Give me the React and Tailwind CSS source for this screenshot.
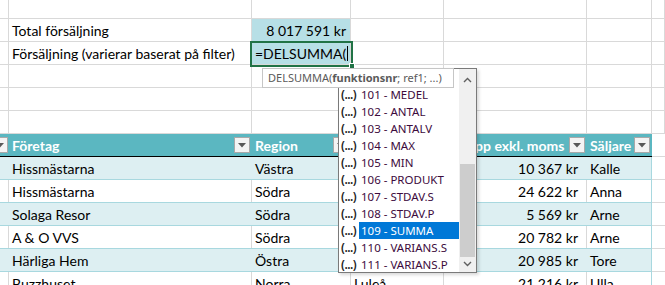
import React from 'react'

const W = ['w-[9px]', 'w-[243px]', 'w-[99px]', 'w-[93px]', 'w-[143px]', 'w-[65px]', 'w-[13px]']

const rows = [
  ['Hissmästarna', 'Västra', 'Umeå', '10 367 kr', 'Kalle'],
  ['Hissmästarna', 'Södra', 'Malmö', '24 622 kr', 'Anna'],
  ['Solaga Resor', 'Södra', 'Lund', '5 569 kr', 'Arne'],
  ['A & O VVS', 'Södra', 'Ystad', '20 782 kr', 'Arne'],
  ['Härliga Hem', 'Östra', 'Visby', '20 985 kr', 'Tore'],
  ['Buzzhuset', 'Norra', 'Luleå', '21 216 kr', 'Ulla'],
]

const items = ['101 - MEDEL', '102 - ANTAL', '103 - ANTALV', '104 - MAX', '105 - MIN', '106 - PRODUKT',
  '107 - STDAV.S', '108 - STDAV.P', '109 - SUMMA', '110 - VARIANS.S', '111 - VARIANS.P']

function FilterBtn() {
  return (
    <div className="w-[16px] h-[16px] shrink-0 bg-[#F4F4F4] border border-[#A9A9A9] flex items-center justify-center">
      <svg width="8" height="5" viewBox="0 0 8 5"><path d="M0 0h8L4 4.5z" fill="#595959" /></svg>
    </div>
  )
}

function GridRow({ h = 'h-[23px]', children }) {
  return <div className={`flex ${h} border-b border-[#D9D9D9]`}>{children}</div>
}

function Cell({ i, className = '', children }) {
  return <div className={`${W[i]} shrink-0 h-full border-r border-[#D9D9D9] flex items-center overflow-hidden whitespace-nowrap ${className}`}>{children}</div>
}

function EmptyRow({ h }) {
  return (
    <GridRow h={h}>
      {W.map((_, i) => <Cell key={i} i={i} />)}
    </GridRow>
  )
}

function HeaderCell({ i, label, className = '' }) {
  return (
    <div className={`${W[i]} shrink-0 h-full flex items-center justify-between overflow-hidden whitespace-nowrap pl-[3px] pr-[2px] ${className}`}>
      <span className="text-white font-bold">{label}</span>
      <FilterBtn />
    </div>
  )
}

function DataRow({ r, teal }) {
  const bg = teal ? 'bg-[#DDEFF2]' : 'bg-white'
  const v = teal ? 'border-[#DDEFF2]' : 'border-[#D9D9D9]'
  return (
    <div className="flex h-[23px]">
      <div className={`flex ${bg} border-b border-[#A8D8DF]`}>
        <div className={`${W[0]} shrink-0 h-full border-r ${v}`} />
        <div className={`${W[1]} shrink-0 h-full border-r ${v} flex items-center pl-[3px]`}>{r[0]}</div>
        <div className={`${W[2]} shrink-0 h-full border-r ${v} flex items-center pl-[3px]`}>{r[1]}</div>
        <div className={`${W[3]} shrink-0 h-full border-r ${v} flex items-center pl-[3px]`}>{r[2]}</div>
        <div className={`${W[4]} shrink-0 h-full border-r ${v} flex items-center justify-end pr-[8px]`}>{r[3]}</div>
        <div className={`${W[5]} shrink-0 h-full border-r border-[#A8D8DF] flex items-center pl-[3px]`}>{r[4]}</div>
      </div>
      <div className={`${W[6]} shrink-0 h-full border-b border-[#D9D9D9]`} />
    </div>
  )
}

export default function App() {
  return (
    <div className="relative w-[665px] h-[285px] overflow-hidden bg-white text-[14px] text-black" style={{ fontFamily: 'Lato, "Open Sans", sans-serif' }}>
      <EmptyRow h="h-[19px]" />
      <GridRow>
        <Cell i={0} />
        <Cell i={1} className="pl-[3px]">Total försäljning</Cell>
        <Cell i={2} className="bg-[#B7DFE6] justify-end pr-[4px]">8 017 591 kr</Cell>
        {W.slice(3).map((_, k) => <Cell key={k} i={k + 3} />)}
      </GridRow>
      <GridRow>
        <Cell i={0} />
        <Cell i={1} className="pl-[3px]">Försäljning (varierar baserat på filter)</Cell>
        <Cell i={2} className="bg-[#B7DFE6] pl-[3px]">
          =DELSUMMA(<span className="inline-block w-px h-[15px] bg-black ml-[1px]" />
        </Cell>
        {W.slice(3).map((_, k) => <Cell key={k} i={k + 3} />)}
      </GridRow>
      <EmptyRow />
      <EmptyRow />
      <EmptyRow />

      {/* table header */}
      <div className="flex h-[23px]">
        <div className="flex bg-[#5BB7C1] border-b border-black">
          <div className={`${W[0]} shrink-0 h-full flex items-center justify-end overflow-hidden pr-[1px]`}><FilterBtn /></div>
          <HeaderCell i={1} label="Företag" />
          <HeaderCell i={2} label="Region" />
          <HeaderCell i={3} label="Ort" />
          <HeaderCell i={4} label="Belopp exkl. moms" />
          <HeaderCell i={5} label="Säljare" />
        </div>
        <div className={`${W[6]} shrink-0 h-full border-b border-[#D9D9D9]`} />
      </div>
      {rows.map((r, k) => <DataRow key={k} r={r} teal={k % 2 === 0} />)}

      {/* active cell border */}
      <div className="absolute left-[250px] top-[41px] w-[103px] h-[26px] border-2 border-[#217346]" />
      <div className="absolute left-[349px] top-[63px] w-[6px] h-[6px] bg-[#217346] border border-white" />

      {/* autocomplete list */}
      <div className="absolute left-[338px] top-[68px] w-[139px] h-[205px] bg-white border border-[#7A7A7A] shadow-[2px_2px_3px_rgba(0,0,0,0.15)] flex" style={{ fontFamily: '"Noto Sans", sans-serif' }}>
        <div className="flex-1 pt-[17px]">
          {items.map((t, k) => (
            <div key={t} className="h-[17px] flex items-center text-[11.5px]">
              <span className="w-[20px] shrink-0 pl-[2px] text-[12px] font-semibold text-[#222] tracking-[-0.5px] leading-none">(...)</span>
              <span className={`flex-1 h-full flex items-center pl-[2px] ${k === 8 ? 'bg-[#0078D7] text-white' : 'text-[#3D0B3D]'}`}>{t}</span>
            </div>
          ))}
        </div>
        <div className="w-[17px] h-full bg-[#F0F0F0] flex flex-col items-center">
          <div className="h-[17px] flex items-center justify-center mt-[2px]">
            <svg width="9" height="6" viewBox="0 0 9 6"><path d="M1 5l3.5-3.5L8 5" stroke="#606060" strokeWidth="1.4" fill="none" /></svg>
          </div>
          <div className="mt-[76px] w-[15px] h-[93px] bg-[#CDCDCD]" />
          <div className="h-[14px] flex items-center justify-center">
            <svg width="9" height="6" viewBox="0 0 9 6"><path d="M1 1l3.5 3.5L8 1" stroke="#606060" strokeWidth="1.4" fill="none" /></svg>
          </div>
        </div>
      </div>

      {/* tooltip */}
      <div className="absolute left-[262px] top-[68px] w-[192px] h-[20px] bg-white border border-[#C6C6C6] flex items-center pl-[5px] text-[11px] text-[#5A5A5A] whitespace-nowrap" style={{ fontFamily: '"Noto Sans", sans-serif' }}>
        DELSUMMA(<span className="font-bold">funktionsnr</span>; ref1; ...)
      </div>
    </div>
  )
}
